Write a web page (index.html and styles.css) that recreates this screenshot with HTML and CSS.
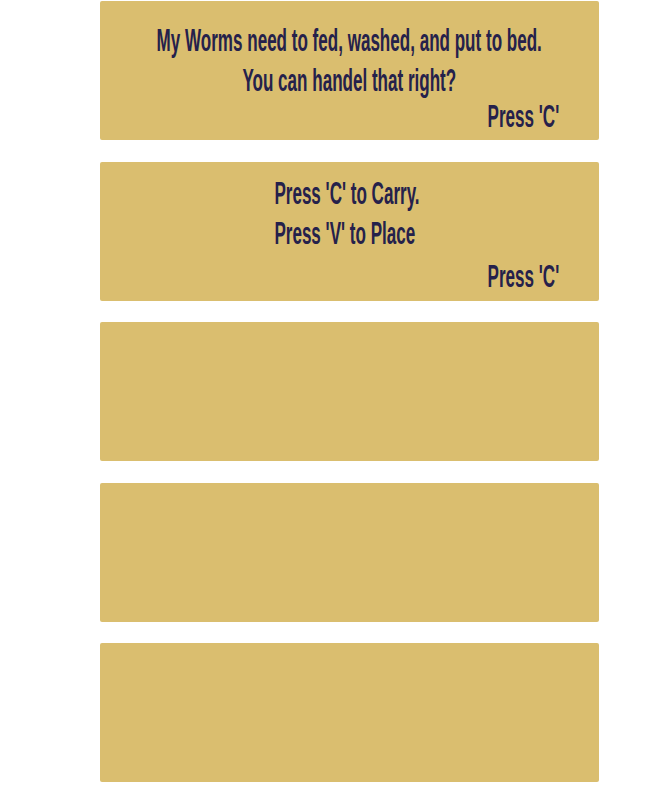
FILE: index.html
```html
<!DOCTYPE html>
<html>
<head>
<meta charset="utf-8">
<link rel="stylesheet" href="styles.css">
</head>
<body>
<div class="stack">
  <div class="box box-intro">
    <div class="msg">
      <span class="line">My Worms need to fed, washed, and put to bed.</span>
      <span class="line">You can handel that right?</span>
    </div>
    <div class="prompt"><span class="line">Press 'C'</span></div>
  </div>
  <div class="box box-help">
    <div class="msg">
      <span class="line block-left">Press 'C' to Carry.<br>Press 'V' to Place</span>
    </div>
    <div class="prompt"><span class="line">Press 'C'</span></div>
  </div>
  <div class="box"></div>
  <div class="box"></div>
  <div class="box"></div>
</div>
</body>
</html>
```
FILE: styles.css
```css
html, body {
  margin: 0;
  padding: 0;
  background: #ffffff;
}
body {
  font-family: "Liberation Sans Narrow", "Liberation Sans", Arial, sans-serif;
  color: #25214b;
}
.stack {
  display: flex;
  flex-direction: column;
  gap: 21.5px;
  padding: 1px 0 0 100px;
  width: 499px;
}
.box {
  height: 139px;
  background: #dabe6f;
  border-radius: 2px;
  display: flex;
  flex-direction: column;
  box-sizing: border-box;
  font-size: 31px;
  line-height: 40px;
}
.box-intro {
  padding: 20px 40px 7px 0;
}
.box-help {
  padding: 12px 40px 8px 0;
}
.msg {
  display: flex;
  flex-direction: column;
  align-items: center;
  padding-left: 40px;
}
.line {
  display: inline-block;
  white-space: nowrap;
  font-weight: bold;
  transform: scaleX(0.55);
  transform-origin: center;
}
.msg .line {
  width: max-content;
}
.block-left {
  text-align: left;
  margin-left: -6px;
}
.prompt {
  margin-top: auto;
  text-align: right;
  line-height: 32px;
}
.prompt .line {
  transform-origin: right center;
}
```
